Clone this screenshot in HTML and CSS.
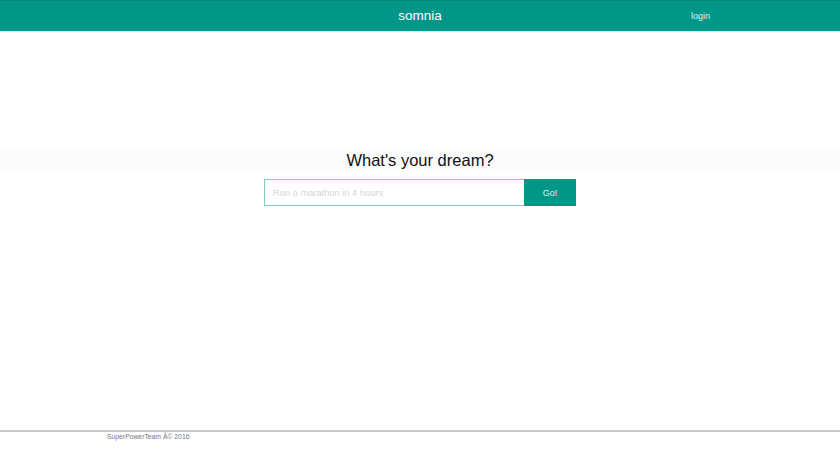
FILE: index.html
```html
<!DOCTYPE html>
<html>
<head>
<meta charset="utf-8">
<link rel="stylesheet" href="styles.css">
</head>
<body>
<header class="topbar">
  <div class="brand">somnia</div>
  <a class="login" href="#">login</a>
</header>
<main class="main">
  <section class="hero">
    <h1 class="title">What's your dream?</h1>
  </section>
  <form class="dream-form">
    <input class="dream-input" type="text" placeholder="Run a marathon in 4 hours">
    <button class="go" type="button">Go!</button>
  </form>
</main>
<footer class="footer">
  <div class="footer-text">SuperPowerTeam Â© 2016</div>
</footer>
</body>
</html>
```
FILE: styles.css
```css
html, body {
  margin: 0;
  padding: 0;
  height: 100%;
}
body {
  font-family: "Liberation Sans", Arial, sans-serif;
  background: #fff;
  display: flex;
  flex-direction: column;
  height: 449px;
  overflow: hidden;
}
.topbar {
  height: 30px;
  background: #009688;
  border-top: 1px solid #008a7d;
  border-bottom: 1px solid #e0f0ee;
  position: relative;
  display: flex;
  align-items: center;
  justify-content: center;
  flex: none;
}
.brand {
  color: #fff;
  font-size: 13.5px;
  line-height: 30px;
}
.login {
  position: absolute;
  left: 691px;
  top: 0;
  line-height: 30px;
  color: #e6f4f2;
  font-size: 9px;
  text-decoration: none;
}
.main {
  flex: 1;
  display: flex;
  flex-direction: column;
  align-items: center;
  padding-top: 116px;
}
.hero {
  width: 100%;
  background: #fcfcfc;
  height: 25px;
  display: flex;
  align-items: center;
  justify-content: center;
}
.title {
  margin: 0;
  font-weight: normal;
  font-size: 16.5px;
  color: #111;
  line-height: 25px;
  position: relative;
  top: 0;
}
.dream-form {
  display: flex;
  margin-top: 6px;
}
.dream-input {
  width: 260px;
  height: 27px;
  box-sizing: border-box;
  border: 1px solid #7fcac2;
  border-right: none;
  padding: 0 8px;
  font-family: "Liberation Sans", Arial, sans-serif;
  font-size: 9.3px;
  outline: none;
  color: #333;
}
.dream-input::placeholder {
  color: #d6d6d6;
}
.go {
  width: 52px;
  height: 27px;
  border: none;
  background: #009688;
  color: #e8f5f3;
  font-family: "Liberation Sans", Arial, sans-serif;
  font-size: 9px;
  padding: 0;
}
.footer {
  flex: none;
  height: 17px;
  border-top: 2px solid #c8c8c8;
}
.footer-text {
  padding-left: 107px;
  padding-top: 1px;
  font-size: 6.8px;
  color: #777;
}
```
